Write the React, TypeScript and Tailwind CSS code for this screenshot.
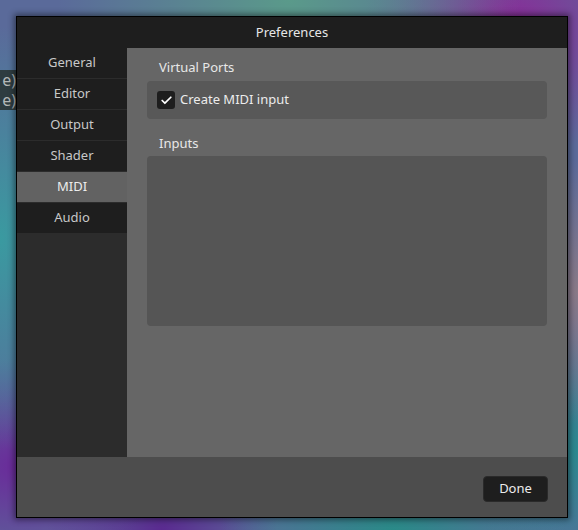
import { Check } from "lucide-react";

const pages = ["General", "Editor", "Output", "Shader", "MIDI", "Audio"];

const App = () => {
  return (
    <div
      className="relative w-[578px] h-[530px] overflow-hidden bg-[#5a6a9a] bg-[radial-gradient(ellipse_40%_30%_at_50%_0%,#5a9a8a,transparent),radial-gradient(ellipse_25%_25%_at_88%_5%,#8a2a98,transparent),radial-gradient(ellipse_20%_40%_at_0%_45%,#3a9aa0,transparent),radial-gradient(ellipse_25%_20%_at_3%_88%,#6a2a9a,transparent),radial-gradient(ellipse_20%_25%_at_100%_55%,#8a7a88,transparent),radial-gradient(ellipse_30%_25%_at_68%_100%,#2a8a88,transparent),radial-gradient(ellipse_20%_25%_at_100%_85%,#2a8a90,transparent),radial-gradient(ellipse_20%_20%_at_28%_100%,#5a2a90,transparent)]"
      style={{ fontFamily: '"Noto Sans", "DejaVu Sans", sans-serif' }}
    >
      {/* window behind, mostly covered */}
      <div className="absolute left-0 top-[70px] w-[17px] flex flex-col items-end bg-[#2e3c40] text-[#b4b8b8] text-[16px] leading-[20px]">
        <span className="whitespace-nowrap pr-px">e)</span>
        <span className="whitespace-nowrap pr-px">e)</span>
      </div>

      {/* preferences window */}
      <div className="absolute left-[16px] top-[16px] w-[552px] h-[502px] border border-black flex flex-col shadow-[0_0_6px_2px_rgba(0,0,0,0.45)]">
        <div className="h-[31px] bg-[#1e1e1e] flex items-center justify-center text-[13px] text-[#e6e6e6]">
          Preferences
        </div>

        <div className="flex h-[409px]">
          <div className="w-[110px] bg-[#2c2c2c] flex flex-col gap-px">
            {pages.map((page) => (
              <div
                key={page}
                className={
                  page === "MIDI"
                    ? "h-[30px] flex items-center justify-center text-[13px] bg-[#626262] text-[#ececec]"
                    : "h-[30px] flex items-center justify-center text-[13px] bg-[#1e1e1e] text-[#c8c8c8]"
                }
              >
                {page}
              </div>
            ))}
          </div>

          <div className="flex-1 bg-[#666666] px-[20px] pt-[10px]">
            <div className="pl-[12px] h-[20px] flex items-center text-[13px] text-[#e8e8e8]">
              Virtual Ports
            </div>
            <div className="mt-[3px] h-[38px] rounded-[4px] bg-[#585858] flex items-center px-[10px] gap-[5px]">
              <div className="w-[18px] h-[18px] rounded-[3px] bg-[#1e1e1e] flex items-center justify-center">
                <Check size={13} strokeWidth={3.2} className="text-white" />
              </div>
              <span className="text-[13px] text-[#ececec]">Create MIDI input</span>
            </div>

            <div className="mt-[15px] pl-[12px] h-[20px] flex items-center text-[13px] text-[#e8e8e8]">
              Inputs
            </div>
            <div className="mt-[2px] h-[170px] rounded-[4px] bg-[#555555]" />
          </div>
        </div>

        <div className="flex-1 bg-[#4d4d4d] flex items-start justify-end pt-[19px] pr-[19px]">
          <button className="w-[65px] h-[26px] rounded-[4px] bg-[#1e1e1e] border border-[#2a2a2a] text-[13px] text-[#ececec]">
            Done
          </button>
        </div>
      </div>
    </div>
  );
};

export default App;
